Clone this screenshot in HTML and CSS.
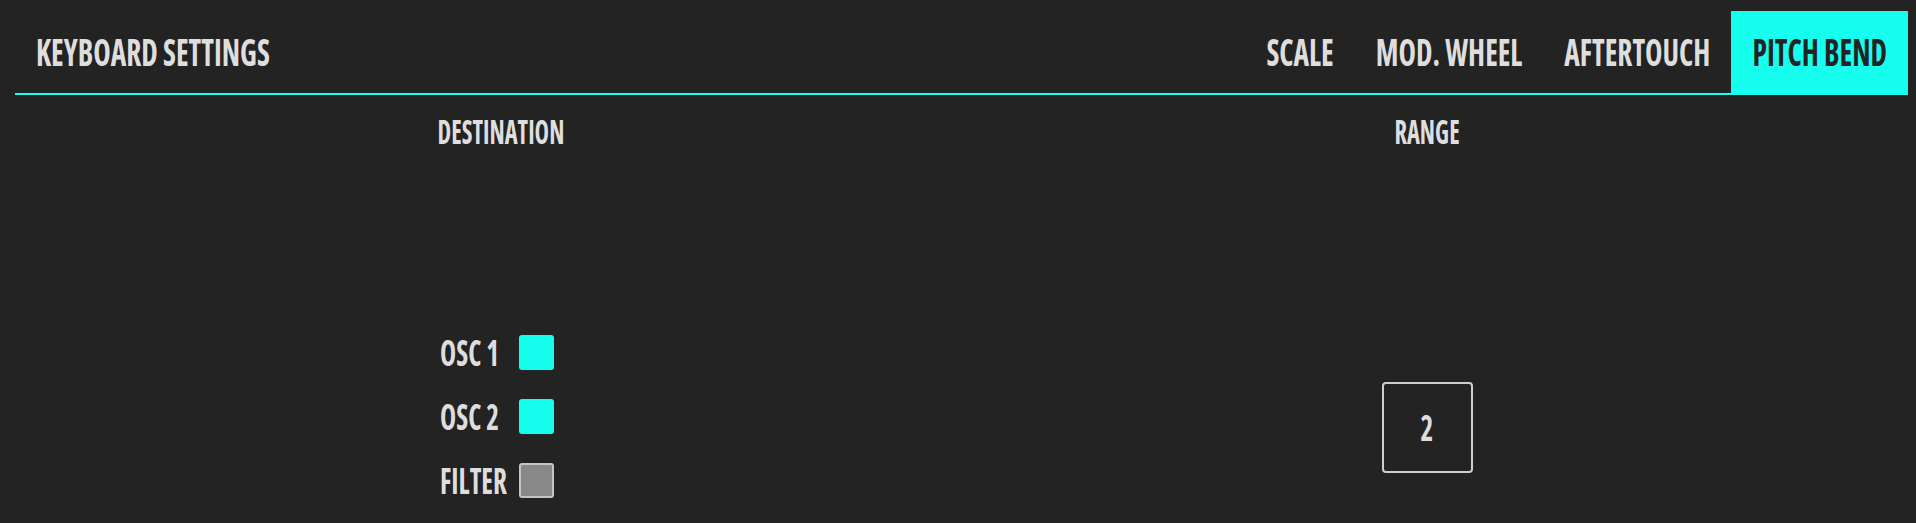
FILE: index.html
```html
<!DOCTYPE html>
<html>
<head>
<meta charset="utf-8">
<title>Keyboard Settings</title>
<link rel="stylesheet" href="styles.css">
</head>
<body>
<div class="app">
  <header class="topbar">
    <div class="title"><span class="txt">KEYBOARD SETTINGS</span></div>
    <nav class="tabs">
      <div class="tab"><span class="txt">SCALE</span></div>
      <div class="tab"><span class="txt">MOD. WHEEL</span></div>
      <div class="tab"><span class="txt">AFTERTOUCH</span></div>
      <div class="tab active"><span class="txt">PITCH BEND</span></div>
    </nav>
  </header>
  <main class="panel">
    <section class="col">
      <h2 class="heading"><span class="txt">DESTINATION</span></h2>
      <div class="dest">
        <span class="label"><span class="txt">OSC 1</span></span>
        <span class="check on"></span>
        <span class="label"><span class="txt">OSC 2</span></span>
        <span class="check on"></span>
        <span class="label"><span class="txt">FILTER</span></span>
        <span class="check off"></span>
      </div>
    </section>
    <section class="col">
      <h2 class="heading"><span class="txt">RANGE</span></h2>
      <div class="range-wrap">
        <div class="range"><span class="txt">2</span></div>
      </div>
    </section>
  </main>
</div>
</body>
</html>
```
FILE: styles.css
```css
html, body {
  margin: 0;
  padding: 0;
  background: #232323;
}
body {
  height: 523px;
  overflow: hidden;
  font-family: "Open Sans", "Roboto", sans-serif;
  font-stretch: 75%;
  font-weight: 700;
  color: #dedede;
}
.txt {
  display: inline-block;
  transform-origin: 50% 50%;
}
.app {
  padding: 11px 8px 0 15px;
}
.topbar {
  display: flex;
  justify-content: space-between;
  align-items: stretch;
  height: 82px;
  border-bottom: 2px solid #16ffee;
}
.title,
.tab {
  display: flex;
  align-items: center;
  padding: 0 21px;
  font-size: 29.5px;
  line-height: 40px;
}
.title .txt,
.tab .txt {
  transform: scaleY(1.3);
}
.tabs {
  display: flex;
  align-items: stretch;
}
.tab.active {
  background: #16ffee;
  color: #232323;
}
.panel {
  display: grid;
  grid-template-columns: 926px 926px;
  margin-left: 23px;
}
.col {
  display: flex;
  flex-direction: column;
  align-items: center;
}
.heading {
  margin: 22px 0 0;
  font-size: 24.5px;
  line-height: 30px;
  font-weight: 700;
}
.heading .txt {
  transform: scaleY(1.37);
}
.dest {
  display: grid;
  grid-template-columns: auto 35px;
  column-gap: 12px;
  row-gap: 29px;
  align-items: center;
  padding-top: 188px;
  margin-right: 8px;
}
.label {
  font-size: 27.3px;
  line-height: 35px;
}
.label .txt,
.range .txt {
  transform: scaleY(1.28);
}
.check {
  width: 35px;
  height: 35px;
  box-sizing: border-box;
  border-radius: 3px;
}
.check.on {
  background: #16ffee;
}
.check.off {
  background: #888888;
  border: 2px solid #c4c4c4;
}
.range-wrap {
  padding-top: 235px;
}
.range {
  width: 91px;
  height: 91px;
  box-sizing: border-box;
  border: 2px solid #cfcfcf;
  border-radius: 4px;
  display: flex;
  align-items: center;
  justify-content: center;
  font-size: 27.3px;
  line-height: 35px;
}
```
